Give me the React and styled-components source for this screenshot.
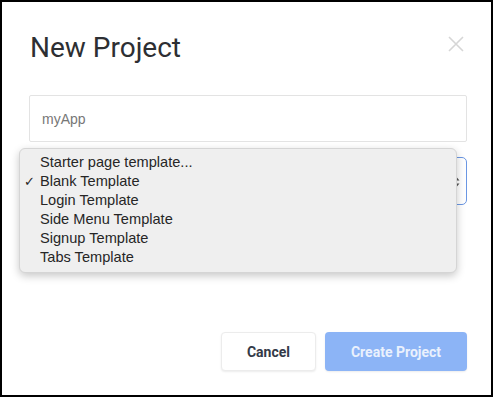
import React from 'react'
import styled, { createGlobalStyle } from 'styled-components'

const GlobalStyle = createGlobalStyle`
  html, body {
    margin: 0;
    padding: 0;
    background: #fff;
  }
`

const templates = [
  'Starter page template...',
  'Blank Template',
  'Login Template',
  'Side Menu Template',
  'Signup Template',
  'Tabs Template',
]

const App = () => {
  return (
    <>
      <GlobalStyle />
      <Frame>
        <Header>
          <Title>New Project</Title>
          <CloseButton aria-label='close'>
            <svg width='16' height='16' viewBox='0 0 16 16'>
              <path d='M1 1 L15 15 M15 1 L1 15' stroke='#d6d6d6' strokeWidth='1.6' fill='none' />
            </svg>
          </CloseButton>
        </Header>

        <NameInput defaultValue='' placeholder='myApp' />

        <SelectWrap>
          <SelectBox>
            <Arrows>
              <svg width='7' height='12' viewBox='0 0 7 12'>
                <path d='M0.5 4.5 L3.5 1 L6.5 4.5 Z M0.5 7.5 L3.5 11 L6.5 7.5 Z' fill='#555' />
              </svg>
            </Arrows>
          </SelectBox>
          <Menu>
            {templates.map((t, i) => (
              <MenuItem key={t} checked={i === 1}>
                {t}
              </MenuItem>
            ))}
          </Menu>
        </SelectWrap>

        <Footer>
          <Button>Cancel</Button>
          <Button primary>Create Project</Button>
        </Footer>
      </Frame>
    </>
  )
}

export default App

const Frame = styled.div`
  width: 493px;
  height: 397px;
  box-sizing: border-box;
  border: 2px solid #000;
  padding: 29px 24px 0 27px;
  display: flex;
  flex-direction: column;
  background: #fff;
  font-family: Roboto, 'Liberation Sans', sans-serif;
`

const Header = styled.div`
  display: flex;
  justify-content: space-between;
  align-items: flex-start;
  height: 33px;
`

const Title = styled.h1`
  margin: 0;
  font-size: 28px;
  line-height: 33px;
  font-weight: 400;
  color: #2d2f33;
  padding-left: 1px;
`

const CloseButton = styled.div`
  margin-top: 5px;
  margin-right: 3px;
  width: 16px;
  height: 16px;
`

const NameInput = styled.input`
  margin-top: 31px;
  height: 47px;
  box-sizing: border-box;
  border: 1px solid #e3e3e3;
  border-radius: 2px;
  padding: 0 12px;
  font-family: 'Liberation Sans', Arial, sans-serif;
  font-size: 14px;
  color: #555;
  outline: none;
  &::placeholder {
    color: #777;
  }
`

const SelectWrap = styled.div`
  position: relative;
  margin-top: 15px;
`

const SelectBox = styled.div`
  height: 48px;
  box-sizing: border-box;
  border: 1px solid #6b97e3;
  border-radius: 5px;
  display: flex;
  align-items: center;
  justify-content: flex-end;
  padding-right: 6px;
`

const Arrows = styled.span`
  display: flex;
  margin-top: 2px;
`

const Menu = styled.div`
  position: absolute;
  left: -10px;
  top: -9px;
  width: 438px;
  box-sizing: border-box;
  padding: 4px 0 5px;
  background: #efefef;
  border: 1px solid #d5d5d5;
  border-radius: 6px;
  box-shadow: 0 3px 8px rgba(0, 0, 0, 0.22);
  font-family: 'Liberation Sans', Arial, sans-serif;
  font-size: 14.6px;
  color: #262626;
`

const MenuItem = styled.div`
  position: relative;
  height: 19px;
  line-height: 19px;
  padding-left: 20px;
  &::before {
    content: ${(p) => (p.checked ? "'✓'" : "''")};
    position: absolute;
    left: 4px;
    top: 0;
    font-size: 13px;
  }
`

const Footer = styled.div`
  margin-top: auto;
  margin-bottom: 24px;
  display: flex;
  justify-content: flex-end;
  gap: 9px;
`

const Button = styled.button`
  height: 39px;
  padding: 0 ${(p) => (p.primary ? '23px' : '25px')};
  min-width: ${(p) => (p.primary ? '142px' : '93px')};
  border-radius: 4px;
  border: ${(p) => (p.primary ? 'none' : '1px solid #ececec')};
  background: ${(p) => (p.primary ? '#8cb4f6' : '#fff')};
  color: ${(p) => (p.primary ? '#eaf1fd' : '#333a48')};
  box-shadow: 0 1px 2px rgba(0, 0, 0, 0.08);
  font-family: Roboto, 'Liberation Sans', sans-serif;
  font-weight: 700;
  font-size: 14px;
  cursor: pointer;
`
